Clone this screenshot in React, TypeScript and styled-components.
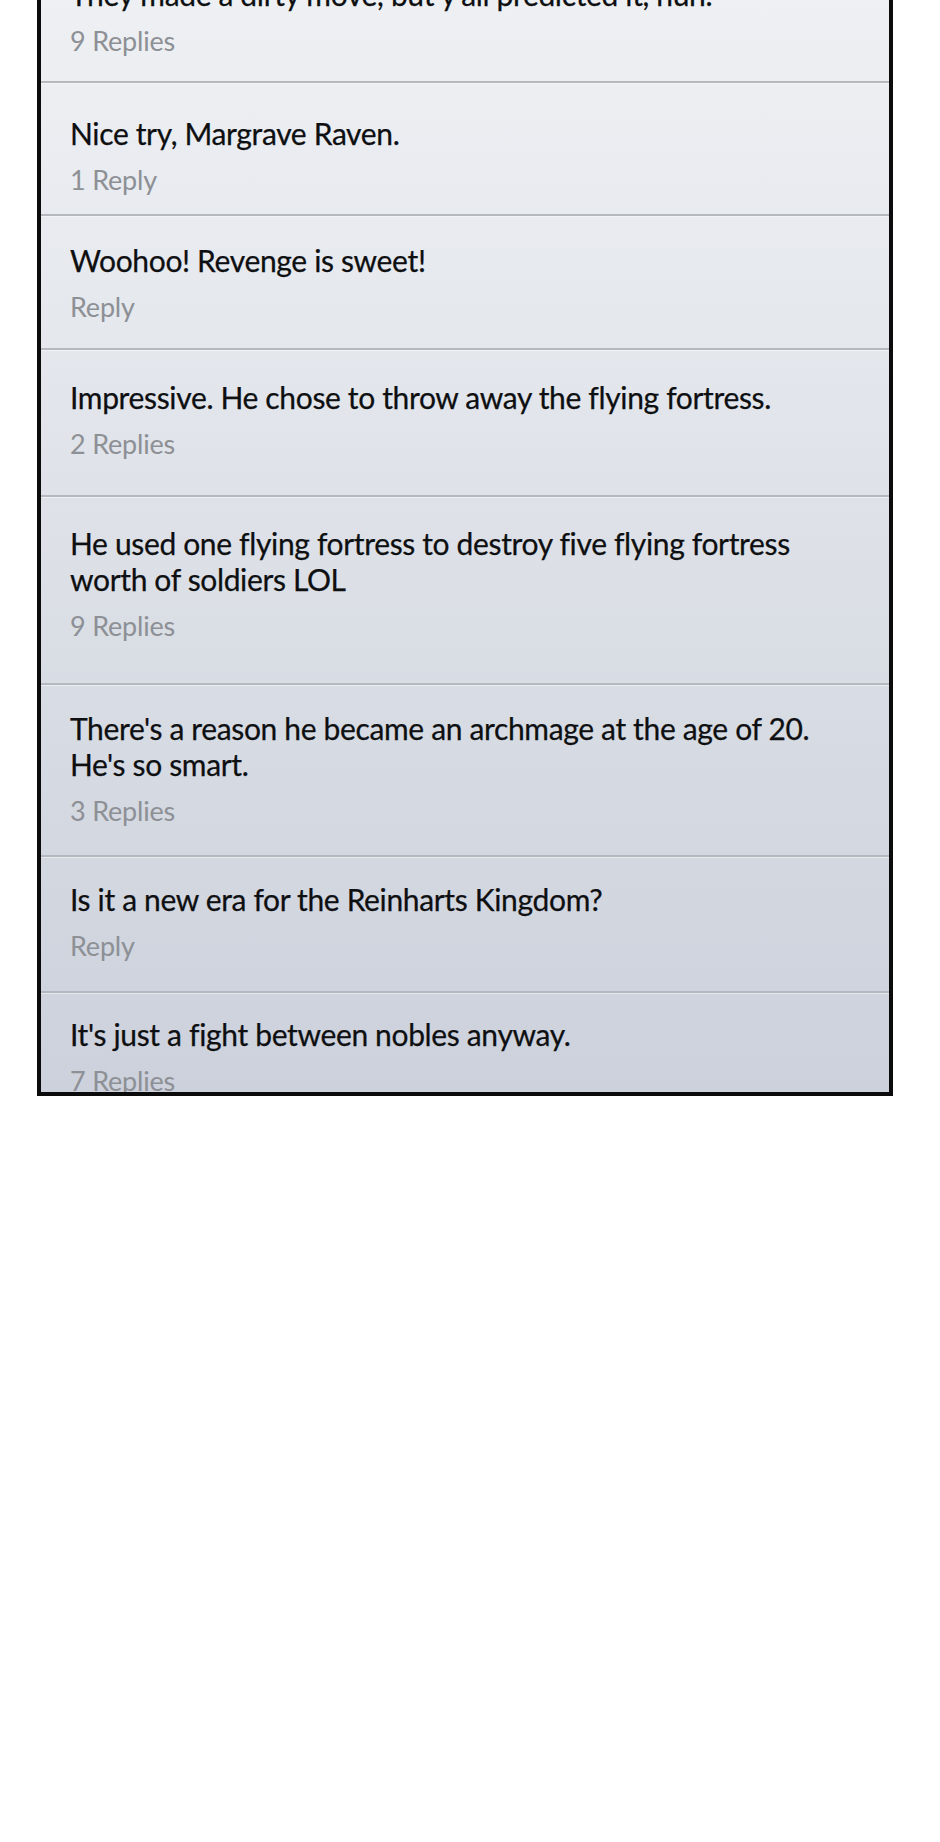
import styled, {createGlobalStyle} from "styled-components";

const GlobalStyle = createGlobalStyle`
    html, body {
        margin: 0;
        padding: 0;
        background: #ffffff;
    }

    body {
        font-family: Lato, "Open Sans", sans-serif;
        overflow: hidden;
    }
`

const StyledPage = styled.div`
    width: 940px;
    height: 1842px;
    background: #ffffff;
    overflow: hidden;
`

const StyledThreadDiv = styled.div`
    margin: -52px 0 0 37px;
    width: 848px;
    height: 1144px;
    border: 4px solid #0b0b0b;
    border-top: none;
    overflow: hidden;
    background: linear-gradient(180deg, #eff1f4 0%, #e6e9ee 30%, #d9dde4 62%, #ccd1dc 100%);
`

const StyledRowDiv = styled.div<{ $top: number, $bottom: number }>`
    padding: ${p => p.$top}px 40px ${p => p.$bottom}px 29px;
    border-bottom: 2px solid #b4b8bf;
    box-shadow: 0 1px 0 rgba(255, 255, 255, 0.45);
`

const StyledTextP = styled.p`
    margin: 0;
    font-size: 30px;
    line-height: 36px;
    color: #0e0f11;
    letter-spacing: -0.35px;
    -webkit-text-stroke: 0.25px #0e0f11;
`

const StyledReplySpan = styled.span`
    display: block;
    margin-top: 11px;
    font-size: 27px;
    line-height: 36px;
    color: #8d9095;
    letter-spacing: -0.2px;
`

type Comment = {
    text: string
    replies: number
    top: number
    bottom: number
}

const comments: Comment[] = [
    {text: "They made a dirty move, but y'all predicted it, huh.", replies: 9, top: 28, bottom: 22},
    {text: "Nice try, Margrave Raven.", replies: 1, top: 32, bottom: 16},
    {text: "Woohoo! Revenge is sweet!", replies: 0, top: 26, bottom: 23},
    {text: "Impressive. He chose to throw away the flying fortress.", replies: 2, top: 29, bottom: 33},
    {text: "He used one flying fortress to destroy five flying fortress worth of soldiers LOL", replies: 9, top: 28, bottom: 39},
    {text: "There's a reason he became an archmage at the age of 20. He's so smart.", replies: 3, top: 25, bottom: 26},
    {text: "Is it a new era for the Reinharts Kingdom?", replies: 0, top: 24, bottom: 27},
    {text: "It's just a fight between nobles anyway.", replies: 7, top: 23, bottom: 24},
]

const replyLabel = (n: number) => {
    if (n === 0) return "Reply"
    if (n === 1) return "1 Reply"
    return `${n} Replies`
}

export default function App() {
    return <StyledPage>
        <GlobalStyle/>
        <StyledThreadDiv>
            {
                comments.map((c, i) => {
                    return <StyledRowDiv key={i} $top={c.top} $bottom={c.bottom}>
                        <StyledTextP>{c.text}</StyledTextP>
                        <StyledReplySpan>{replyLabel(c.replies)}</StyledReplySpan>
                    </StyledRowDiv>
                })
            }
        </StyledThreadDiv>
    </StyledPage>
}
